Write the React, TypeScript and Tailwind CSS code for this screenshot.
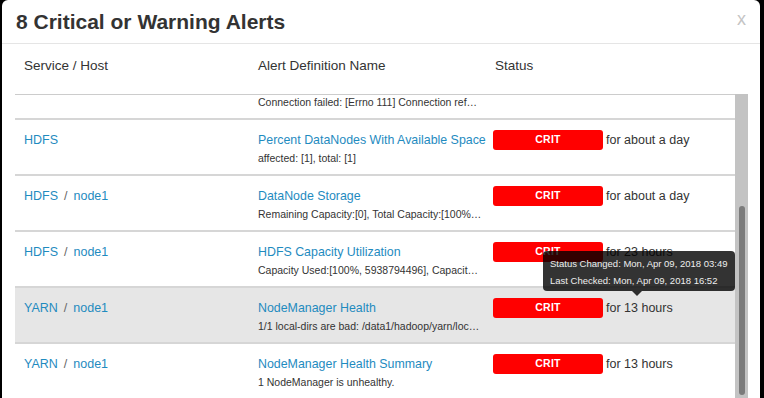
import React from "react";

interface AlertRow {
  service: string;
  host?: string;
  name: string;
  text: string;
  since: string;
  active?: boolean;
  tooltip?: boolean;
}

const rows: AlertRow[] = [
  {
    service: "HDFS",
    host: "node1",
    name: "DataNode Web UI",
    text: "Connection failed: [Errno 111] Connection ref…",
    since: "for about a day",
  },
  {
    service: "HDFS",
    name: "Percent DataNodes With Available Space",
    text: "affected: [1], total: [1]",
    since: "for about a day",
  },
  {
    service: "HDFS",
    host: "node1",
    name: "DataNode Storage",
    text: "Remaining Capacity:[0], Total Capacity:[100%…",
    since: "for about a day",
  },
  {
    service: "HDFS",
    host: "node1",
    name: "HDFS Capacity Utilization",
    text: "Capacity Used:[100%, 5938794496], Capacit…",
    since: "for 23 hours",
    tooltip: true,
  },
  {
    service: "YARN",
    host: "node1",
    name: "NodeManager Health",
    text: "1/1 local-dirs are bad: /data1/hadoop/yarn/loc…",
    since: "for 13 hours",
    active: true,
  },
  {
    service: "YARN",
    host: "node1",
    name: "NodeManager Health Summary",
    text: "1 NodeManager is unhealthy.",
    since: "for 13 hours",
  },
];

const Row = ({ service, host, name, text, since, active, tooltip }: AlertRow) => (
  <div
    className={`relative grid grid-cols-[243px_235px_1fr] border-b-2 border-[#d6d6d6] pt-[9.5px] pb-[8.5px] ${
      active ? "bg-[#e6e6e6]" : ""
    }`}
  >
    <div className="pl-[9px] text-[12.5px] leading-[20px] whitespace-nowrap">
      <span className="text-[#1f8bbf]">{service}</span>
      {host && (
        <>
          <span className="mx-[6px] text-[#666]">/</span>
          <span className="text-[#1f8bbf]">{host}</span>
        </>
      )}
    </div>
    <div className="whitespace-nowrap">
      <div className="text-[12.4px] leading-[20px] text-[#1f8bbf]">{name}</div>
      <div className="text-[10.5px] leading-[16px] text-[#333]">{text}</div>
    </div>
    <div className="flex items-start">
      <span className="flex h-[20px] w-[110px] items-center justify-center rounded-[3px] bg-[#ff0000] text-[10.5px] font-bold tracking-[0.3px] text-white">
        CRIT
      </span>
      <span className="ml-[3px] text-[12.5px] leading-[20px] text-[#333]">{since}</span>
    </div>

    {tooltip && (
      <div className="absolute left-[528px] top-[18.5px] z-10 h-[40px] w-[192px] rounded-[4px] bg-black/80 px-[7px] pt-[4px] text-[9.5px] leading-[17px] text-[#eee]">
        <div>Status Changed: Mon, Apr 09, 2018 03:49</div>
        <div>Last Checked: Mon, Apr 09, 2018 16:52</div>
        <span className="absolute left-[89px] top-full border-x-[5px] border-t-[5px] border-x-transparent border-t-black/80" />
      </div>
    )}
  </div>
);

export default function App() {
  return (
    <div className="h-[398px] w-[764px] overflow-hidden bg-black font-['Liberation_Sans',Arial,sans-serif]">
      <div className="ml-[2px] flex h-full w-[758px] flex-col rounded-t-[6px] bg-white">
        <div className="flex h-[44px] shrink-0 items-center justify-between border-b border-[#e5e5e5] pl-[14px] pr-[14px]">
          <h3 className="text-[21px] font-bold leading-none text-[#333]">8 Critical or Warning Alerts</h3>
          <span className="-mt-[5px] text-[18px] leading-none text-[#c4c4c4]">x</span>
        </div>

        <div className="flex min-h-0 flex-1 pl-[13px] pr-[12px]">
          <div className="flex w-[720px] flex-col">
            <div className="grid h-[51px] shrink-0 grid-cols-[243px_237px_1fr] border-b border-[#cccccc] pt-[12px] text-[13.5px] leading-[20px] text-[#333]">
              <div className="pl-[9px]">Service / Host</div>
              <div>Alert Definition Name</div>
              <div>Status</div>
            </div>
            <div className="min-h-0 flex-1 overflow-hidden">
              <div className="-mt-[31px]">
                {rows.map((r) => (
                  <Row key={r.name} {...r} />
                ))}
              </div>
            </div>
          </div>

          <div className="mt-[50px] flex w-[13px] justify-center bg-[#c3c3c3] pt-[112px]">
            <div className="h-[189px] w-[6px] rounded-[3px] bg-[#7b7b7b]" />
          </div>
        </div>
      </div>
    </div>
  );
}
